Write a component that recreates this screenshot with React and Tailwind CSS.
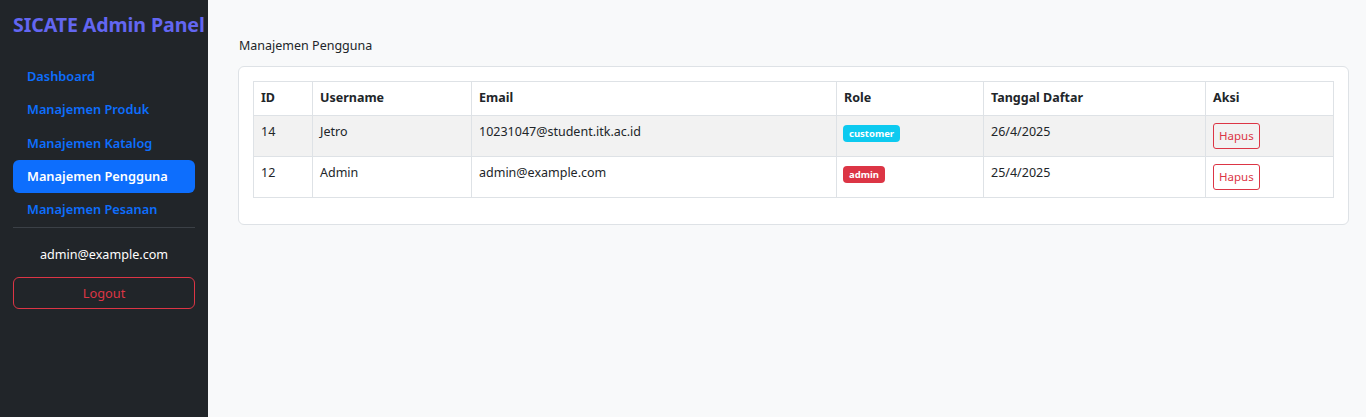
import React from 'react';

const NAV = ['Dashboard', 'Manajemen Produk', 'Manajemen Katalog', 'Manajemen Pengguna', 'Manajemen Pesanan'];

const USERS = [
  { id: 14, username: 'Jetro', email: '10231047@student.itk.ac.id', role: 'customer', date: '26/4/2025' },
  { id: 12, username: 'Admin', email: 'admin@example.com', role: 'admin', date: '25/4/2025' },
];

export default function App() {
  return (
    <div className="flex min-h-[417px] font-['Noto_Sans',sans-serif] text-[#212529]">
      <aside className="w-[208px] shrink-0 bg-[#212529] px-[13px] pt-[12px]">
        <h1 className="text-[19.6px] font-bold text-[#6366f1] whitespace-nowrap leading-[26px] tracking-[-0.1px]">SICATE Admin Panel</h1>
        <nav className="mt-[22px] flex flex-col">
          {NAV.map(item => (
            <a
              key={item}
              className={`h-[33.3px] flex items-center px-[14px] rounded-md text-[12.8px] font-semibold whitespace-nowrap ${item === 'Manajemen Pengguna' ? 'bg-[#0d6efd] text-white' : 'text-[#0d6efd]'}`}
            >
              {item}
            </a>
          ))}
        </nav>
        <div className="mt-[1px] border-t border-[#3b4046]" />
        <p className="mt-[15px] text-center text-[12.6px] text-white leading-[24px]">admin@example.com</p>
        <button className="mt-[10px] w-full h-[32px] rounded-md border border-[#dc3545] text-[#dc3545] text-[12.8px]">Logout</button>
      </aside>
      <main className="flex-1 bg-[#f8f9fa] pl-[30px] pr-[17px] pt-[36px]">
        <h2 className="text-[12.5px] leading-[20px] ml-[1px]">Manajemen Pengguna</h2>
        <div className="mt-[10px] bg-white border border-[#dee2e6] rounded-md px-[14px] pt-[14px] pb-[26px]">
          <table className="w-full border-collapse text-[12.5px]">
            <thead>
              <tr className="h-[34px]">
                <th className="w-[59px] border border-[#dee2e6] px-[7px] text-left font-bold">ID</th>
                <th className="w-[159px] border border-[#dee2e6] px-[7px] text-left font-bold">Username</th>
                <th className="w-[365px] border border-[#dee2e6] px-[7px] text-left font-bold">Email</th>
                <th className="w-[147px] border border-[#dee2e6] px-[7px] text-left font-bold">Role</th>
                <th className="w-[222px] border border-[#dee2e6] px-[7px] text-left font-bold">Tanggal Daftar</th>
                <th className="border border-[#dee2e6] px-[7px] text-left font-bold">Aksi</th>
              </tr>
            </thead>
            <tbody>
              {USERS.map((u, i) => (
                <tr key={u.id} className={`h-[41px] ${i === 0 ? 'bg-[#f2f2f2]' : 'bg-white'}`}>
                  <td className="border border-[#dee2e6] px-[7px] align-top pt-[7px]">{u.id}</td>
                  <td className="border border-[#dee2e6] px-[7px] align-top pt-[7px]">{u.username}</td>
                  <td className="border border-[#dee2e6] px-[7px] align-top pt-[7px]">{u.email}</td>
                  <td className="border border-[#dee2e6] px-[6px] align-top pt-[9px]">
                    <span className={`block w-fit px-[6px] h-[17px] leading-[17px] rounded-[4px] text-[9.5px] font-bold text-white ${u.role === 'admin' ? 'bg-[#dc3545]' : 'bg-[#0dcaf0]'}`}>{u.role}</span>
                  </td>
                  <td className="border border-[#dee2e6] px-[7px] align-top pt-[7px]">{u.date}</td>
                  <td className="border border-[#dee2e6] px-[7px] py-0 align-middle">
                    <button className="block h-[26px] px-[5px] rounded-[3px] border border-[#dc3545] text-[#dc3545] text-[11.5px]">Hapus</button>
                  </td>
                </tr>
              ))}
            </tbody>
          </table>
        </div>
      </main>
    </div>
  );
}
